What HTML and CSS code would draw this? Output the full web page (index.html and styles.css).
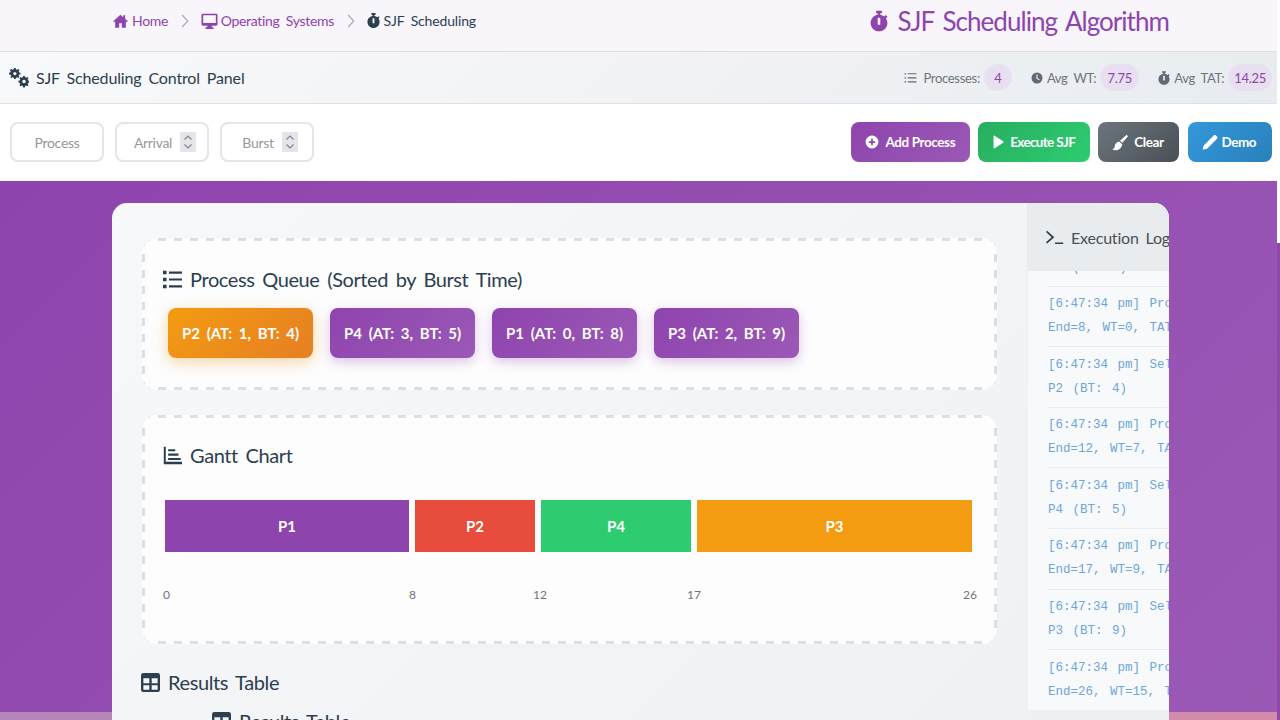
FILE: index.html
```html
<!DOCTYPE html>
<html lang="en">
<head>
<meta charset="utf-8">
<title>SJF Scheduling Algorithm</title>
<link rel="stylesheet" href="styles.css">
</head>
<body>
<svg class="defs" width="0" height="0" aria-hidden="true">
  <symbol id="i-watch" viewBox="0 0 448 512"><path d="M432 304c0 114.900-93.100 208-208 208S16 418.900 16 304c0-104 76.300-190.200 176-205.500V64h-28c-6.600 0-12-5.400-12-12V12c0-6.600 5.400-12 12-12h120c6.600 0 12 5.400 12 12v40c0 6.600-5.400 12-12 12h-28v34.500c37.500 5.800 71.700 21.600 99.700 44.600l27.500-27.500c4.700-4.700 12.300-4.700 17 0l28.300 28.300c4.700 4.700 4.700 12.300 0 17l-29.400 29.400-.6.600C419.700 223.300 432 262.200 432 304zm-176 36V188.500c0-6.600-5.400-12-12-12h-40c-6.600 0-12 5.400-12 12V340c0 6.600 5.400 12 12 12h40c6.600 0 12-5.400 12-12z"/></symbol>
  <symbol id="i-list" viewBox="0 0 24 24"><path d="M0 1h4.500v4.500H0zM0 9.800h4.500v4.500H0zM0 18.500h4.500V23H0zM7.500 2h16.500v2.700H7.500zM7.500 10.700h16.500v2.700H7.500zM7.500 19.400h16.500v2.700H7.500z"/></symbol>
  <symbol id="i-table" viewBox="0 0 24 24"><path fill-rule="evenodd" d="M3 0h18a3 3 0 0 1 3 3v18a3 3 0 0 1-3 3H3a3 3 0 0 1-3-3V3a3 3 0 0 1 3-3zm0 6.500v6.500h7.500V6.500zm10.500 0v6.500H21V6.500zM3 15.500V21h7.500v-5.500zm10.500 0V21H21v-5.500z"/></symbol>
  <symbol id="i-spin" viewBox="0 0 16 20"><path d="M4.500 7.500 8 4l3.500 3.500M4.500 12.500 8 16l3.500-3.500" fill="none" stroke="#85858c" stroke-width="1.200"/></symbol>
  <symbol id="i-chev" viewBox="0 0 10 18"><path d="M1.500 1.500 8.500 9l-7 7.500" fill="none" stroke="#a8a8b0" stroke-width="1.400"/></symbol>
</svg>

<nav class="topbar">
  <div class="crumbs">
    <a class="crumb">
      <svg class="ico" viewBox="0 0 24 24"><path d="M12 2.500 1 12.300l1.300 1.500L4 12.400V22h6v-6.500h4V22h6v-9.600l1.700 1.400 1.300-1.500-4-3.600V3.500h-3v2.800z"/></svg>
      Home
    </a>
    <svg class="sep"><use href="#i-chev"/></svg>
    <a class="crumb">
      <svg class="ico ico-wide" viewBox="0 0 24 24"><path fill-rule="evenodd" d="M2 1h20a2 2 0 0 1 2 2v14a2 2 0 0 1-2 2h-7l.7 2.500H18V24H6v-2.500h2.300L9 19H2a2 2 0 0 1-2-2V3a2 2 0 0 1 2-2zm.5 2.500V15h19V3.500z"/></svg>
      Operating Systems
    </a>
    <svg class="sep"><use href="#i-chev"/></svg>
    <span class="crumb crumb-now">
      <svg class="ico"><use href="#i-watch"/></svg>
      SJF Scheduling
    </span>
  </div>
  <h1 class="page-title"><svg class="title-ico"><use href="#i-watch"/></svg>SJF Scheduling Algorithm</h1>
</nav>

<header class="panel-head">
  <div class="panel-name">
    <svg class="gears" viewBox="0 0 24 24"><path fill-rule="evenodd" d="M7.500 1h2l.4 1.800 1.300.6 1.600-1 1.400 1.400-1 1.600.6 1.300 1.700.4v2l-1.700.4-.6 1.300 1 1.600-1.400 1.400-1.600-1-1.300.6-.4 1.700h-2l-.4-1.700-1.300-.6-1.600 1-1.400-1.400 1-1.600-.6-1.300L1 9.100v-2l1.700-.4.6-1.300-1-1.600 1.400-1.400 1.600 1 1.300-.6zm1 5a2.100 2.100 0 1 0 0 4.200 2.100 2.100 0 0 0 0-4.200z" transform="translate(-1 -1) scale(.95)"/><path fill-rule="evenodd" d="M17 9.500h2l.4 1.700 1.300.6 1.500-.9 1.200 1.400-1 1.500.6 1.300 1 .3v2l-1 .3-.6 1.300 1 1.500-1.200 1.400-1.500-.9-1.300.6-.4 1.700h-2l-.4-1.700-1.300-.6-1.500.9-1.300-1.400 1-1.500-.6-1.300-1.500-.3v-2l1.500-.3.600-1.300-1-1.500 1.300-1.400 1.500.9 1.300-.6zm1 4.700a2.100 2.100 0 1 0 0 4.200 2.100 2.100 0 0 0 0-4.200z"/></svg>
    SJF Scheduling Control Panel
  </div>
  <div class="stats">
    <div class="stat">
      <svg class="stat-ico" viewBox="0 0 24 24"><path d="M1 3h3v2.500H1zM1 10.500h3V13H1zM1 18h3v2.500H1zM7 3h16v2.200H7zM7 10.500h16v2.200H7zM7 18h16v2.200H7z"/></svg>
      <span>Processes:</span><b class="pill">4</b>
    </div>
    <div class="stat">
      <svg class="stat-ico" viewBox="0 0 24 24"><path fill-rule="evenodd" d="M12 1a11 11 0 1 1 0 22 11 11 0 0 1 0-22zm-1.300 4v8l5.500 3.400 1.200-1.900-4.300-2.600V5z"/></svg>
      <span>Avg WT:</span><b class="pill pill-wt">7.75</b>
    </div>
    <div class="stat">
      <svg class="stat-ico"><use href="#i-watch"/></svg>
      <span>Avg TAT:</span><b class="pill">14.25</b>
    </div>
  </div>
</header>

<section class="toolbar">
  <div class="fields">
    <div class="field">Process</div>
    <div class="field field-num">Arrival<svg class="spin"><use href="#i-spin"/></svg></div>
    <div class="field field-num">Burst<svg class="spin"><use href="#i-spin"/></svg></div>
  </div>
  <div class="actions">
    <button class="btn btn-add">
      <svg class="btn-ico" viewBox="0 0 24 24"><path fill-rule="evenodd" d="M12 1a11 11 0 1 1 0 22 11 11 0 0 1 0-22zm-1.500 5.500v4h-4v3h4v4h3v-4h4v-3h-4v-4z"/></svg>
      Add Process
    </button>
    <button class="btn btn-run">
      <svg class="btn-ico btn-ico-play" viewBox="0 0 20 24"><path d="M1 1.500c0-1 1-1.500 2-1l15.500 10.300c.9.600.9 1.800 0 2.400L3 23.500c-1 .5-2 0-2-1z"/></svg>
      Execute SJF
    </button>
    <button class="btn btn-clear">
      <svg class="btn-ico btn-ico-lg" viewBox="0 0 24 24"><path d="M22 .5 24 2.500 15.500 12.500 12 9.500zM10.500 10.500l5 4.300c-.5 3.500-3.500 8.200-8 8.700-2.500.2-5.500-.5-7-1.500 2-.5 3.500-2 3.500-4 .3-3.700 3-6.700 6.500-7.500z"/></svg>
      Clear
    </button>
    <button class="btn btn-demo">
      <svg class="btn-ico btn-ico-lg" viewBox="0 0 24 24"><path d="M17.500 1.500c1-1 2.500-1 3.500 0l1.500 1.500c1 1 1 2.500 0 3.500L7.500 21.500 1 23l1.500-6.500z"/></svg>
      Demo
    </button>
  </div>
</section>

<main class="stage">
  <div class="card">
    <div class="workspace">
      <section class="box box-queue">
        <h2 class="box-title"><svg class="head-ico"><use href="#i-list"/></svg>Process Queue (Sorted by Burst Time)</h2>
        <div class="queue">
          <div class="chip chip-next">P2 (AT: 1, BT: 4)</div>
          <div class="chip">P4 (AT: 3, BT: 5)</div>
          <div class="chip">P1 (AT: 0, BT: 8)</div>
          <div class="chip">P3 (AT: 2, BT: 9)</div>
        </div>
      </section>
      <section class="box box-gantt">
        <h2 class="box-title">
          <svg class="head-ico" viewBox="0 0 24 24"><path d="M1 1h2.500v19H24V23H1zM6.500 4h9v2.700h-9zM6.500 9.500h13v2.700h-13zM6.500 15h16v2.700h-16z"/></svg>
          Gantt Chart
        </h2>
        <div class="gantt">
          <div class="bar bar-p1" style="width:244px">P1</div>
          <div class="bar bar-p2" style="width:120px">P2</div>
          <div class="bar bar-p4" style="width:150px">P4</div>
          <div class="bar bar-p3" style="width:275px">P3</div>
        </div>
        <div class="ticks">
          <span style="width:246px">0</span>
          <span style="width:124px">8</span>
          <span style="width:154px">12</span>
          <span class="tick-last">17<span>26</span></span>
        </div>
      </section>
      <h2 class="results-title"><svg class="head-ico"><use href="#i-table"/></svg>Results Table</h2>
      <h3 class="results-sub"><svg class="head-ico"><use href="#i-table"/></svg>Results Table</h3>
    </div>
    <aside class="log">
      <h2 class="log-title">
        <svg class="term" viewBox="0 0 24 20"><path d="M1.500 1 11 9.500 1.500 18 0 16.300 7.500 9.500 0 2.800zM12 16.500h11V18.500H12z"/></svg>
        Execution Log
      </h2>
      <div class="log-body">
        <ul class="log-list">
          <li><span>[6:47:34 pm] Selected process</span><span>P1 (BT: 8)</span></li>
          <li><span>[6:47:34 pm] Processing P1:</span><span>End=8, WT=0, TAT=8</span></li>
          <li><span>[6:47:34 pm] Selected process</span><span>P2 (BT: 4)</span></li>
          <li><span>[6:47:34 pm] Processing P2:</span><span>End=12, WT=7, TAT=11</span></li>
          <li><span>[6:47:34 pm] Selected process</span><span>P4 (BT: 5)</span></li>
          <li><span>[6:47:34 pm] Processing P4:</span><span>End=17, WT=9, TAT=14</span></li>
          <li><span>[6:47:34 pm] Selected process</span><span>P3 (BT: 9)</span></li>
          <li><span>[6:47:34 pm] Processing P3:</span><span>End=26, WT=15, TAT=24</span></li>
        </ul>
      </div>
    </aside>
  </div>
</main>
</body>
</html>
```

FILE: styles.css
```css
* { box-sizing: border-box; }
html {
  height: 100%;
  background: linear-gradient(#fff 243px, #9049ab 243px);
}
body {
  margin: 0;
  width: 1277px;
  height: 720px;
  overflow: hidden;
  display: flex;
  flex-direction: column;
  font-family: Lato, "Noto Sans", sans-serif;
  word-spacing: 3px;
  color: #2c3e50;
}
.defs { position: absolute; }

.topbar {
  height: 52px;
  flex: none;
  padding: 0 108px 10px 112px;
  display: flex;
  align-items: center;
  justify-content: space-between;
  background: #f8f5fb;
  border-bottom: 1px solid #dedee2;
}
.crumbs { display: flex; align-items: center; font-size: 14px; letter-spacing: -.3px; height: 42px; }
.crumb { display: flex; align-items: center; gap: 3px; color: #8e44ad; }
.crumb-now { color: #2c3e50; gap: 4px; letter-spacing: -.15px; }
.sep { width: 8px; height: 16px; margin: 0 12px 0 12.500px; flex: none; }
.ico { width: 17px; height: 16px; fill: currentColor; }
.crumb-now .ico { width: 13px; height: 15px; }
.page-title {
  margin: 0;
  font-size: 26px;
  letter-spacing: -.95px;
  font-weight: 400;
  color: #8e44ad;
  display: flex;
  align-items: center;
  height: 42px;
}
.title-ico { width: 18px; height: 24px; margin-right: 9px; fill: currentColor; }

.panel-head {
  height: 52px;
  flex: none;
  display: flex;
  align-items: center;
  justify-content: space-between;
  padding: 0 5px 0 9px;
  background: linear-gradient(135deg, #f8f9fa, #e9ecef);
  border-bottom: 1px solid #dee2e6;
}
.panel-name { display: flex; align-items: center; gap: 7px; font-size: 16px; letter-spacing: -.15px; }
.gears { width: 20px; height: 20px; fill: #2c3e50; }
.stats { display: flex; align-items: center; gap: 19px; font-size: 13px; letter-spacing: -.3px; color: #6c757d; }
.stat { display: flex; align-items: center; gap: 4px; }
.stat-ico { width: 12px; height: 14px; fill: #5f6a72; }
.stat:first-child .stat-ico { margin-right: 2px; width: 13px; }
.pill {
  height: 27px;
  min-width: 28px;
  padding: 0 6px;
  border-radius: 14px;
  background: #e8e0f0;
  color: #8e44ad;
  font-weight: 400;
  font-size: 13px;
  display: flex;
  align-items: center;
  justify-content: center;
  word-spacing: 0;
}
.pill-wt { min-width: 39px; }

.toolbar {
  height: 77px;
  flex: none;
  display: flex;
  align-items: center;
  justify-content: space-between;
  padding: 0 5px 1px 10px;
  background: #fff;
}
.fields { display: flex; gap: 11px; }
.field {
  width: 94px;
  height: 40px;
  border: 2px solid #e3e5e8;
  border-radius: 8px;
  background: #fff;
  display: flex;
  align-items: center;
  justify-content: center;
  gap: 8px;
  font-size: 14px;
  letter-spacing: -.3px;
  color: #94989d;
}
.field-num { padding-left: 6px; }
.spin { width: 16px; height: 20px; background: #e4e4ea; flex: none; }
.actions { display: flex; gap: 8px; }
.btn {
  height: 40px;
  border: 0;
  border-radius: 8px;
  padding: 0 15px 0 14px;
  display: flex;
  align-items: center;
  gap: 6px;
  color: #fff;
  font: 700 13.500px Lato, "Noto Sans", sans-serif;
  letter-spacing: -.4px;
  word-spacing: 0;
}
.btn-ico { width: 14px; height: 14px; fill: #fff; }
.btn-ico-play { width: 11px; }
.btn-ico-lg { width: 16px; height: 17px; }
.btn-add { background: linear-gradient(135deg, #8e44ad, #9b59b6); }
.btn-run { background: linear-gradient(135deg, #27ae60, #2ecc71); letter-spacing: -.65px; padding: 0 15px; }
.btn-clear { background: linear-gradient(135deg, #6c757d, #495057); }
.btn-demo {
  background: linear-gradient(135deg, #3498db, #2980b9);
  gap: 4px;
  margin-left: 1px;
  padding: 0 16px 0 14px;
  letter-spacing: -.5px;
}

.stage {
  flex: 1;
  min-height: 0;
  padding: 22px 108px 0 112px;
  overflow: hidden;
  background:
    linear-gradient(135deg, #8e44ad, #9b59b6) top / 100% 531px no-repeat,
    linear-gradient(90deg, #b586ba, #d48ba8);
}
.card {
  width: 1057px;
  height: 560px;
  overflow: hidden;
  display: flex;
  border-radius: 15px 15px 0 0;
  background: linear-gradient(135deg, #f7f8fa, #eef0f3);
}
.workspace { width: 915px; flex: none; padding: 35px 30px 0; }
.box {
  border-radius: 15px;
  padding: 23px;
  background:
    repeating-linear-gradient(90deg, #dcdee2 0 8px, transparent 8px 16px) top / 100% 3px no-repeat,
    repeating-linear-gradient(90deg, #dcdee2 0 8px, transparent 8px 16px) bottom / 100% 3px no-repeat,
    repeating-linear-gradient(0deg, #dcdee2 0 8px, transparent 8px 16px) left / 3px 100% no-repeat,
    repeating-linear-gradient(0deg, #dcdee2 0 8px, transparent 8px 16px) right / 3px 100% no-repeat,
    #fdfdfe;
}
.box-queue { height: 152px; margin-bottom: 25px; }
.box-gantt { height: 229px; }
.box-title {
  margin: 0 0 0 -2px;
  display: flex;
  align-items: center;
  gap: 8px;
  font-size: 20px;
  letter-spacing: -.4px;
  font-weight: 400;
  line-height: 36px;
  color: #2c3e50;
}
.box-gantt .box-title { margin-top: -1px; }
.head-ico { width: 19px; height: 19px; fill: #2c3e50; flex: none; }
.queue { display: flex; gap: 17px; margin: 11px 0 0 3px; }
.chip {
  height: 50px;
  padding: 0 14px;
  border-radius: 8px;
  display: flex;
  align-items: center;
  color: #fff;
  font-size: 15px;
  font-weight: 700;
  background: linear-gradient(135deg, #8e44ad, #9b59b6);
  box-shadow: 0 4px 12px rgba(142, 68, 173, .3);
}
.chip-next {
  background: linear-gradient(135deg, #f39c12, #e67e22);
  box-shadow: 0 4px 15px rgba(243, 156, 18, .4);
}
.gantt { display: flex; gap: 6px; height: 52px; margin: 27px 0 0; }
.bar {
  flex: none;
  display: flex;
  align-items: center;
  justify-content: center;
  color: #fff;
  font-weight: 700;
  font-size: 15px;
}
.bar-p1 { background: #8e44ad; }
.bar-p2 { background: #e74c3c; }
.bar-p4 { background: #2ecc71; }
.bar-p3 { background: #f39c12; }
.ticks {
  display: flex;
  margin: 34px 0 0 -2px;
  width: 814px;
  font-size: 12px;
  line-height: 18px;
  color: #6c757d;
}
.tick-last { flex: 1; display: flex; justify-content: space-between; }
.results-title, .results-sub {
  margin: 0;
  display: flex;
  align-items: center;
  gap: 8px;
  font-weight: 400;
  font-size: 20px;
  letter-spacing: -.4px;
}
.results-title { line-height: 30px; margin: 23px 0 0 -1px; }
.results-sub { margin: 9px 0 0 70px; line-height: 30px; }

.log { width: 320px; flex: none; display: flex; flex-direction: column; background: #eef0f2; }
.log-title {
  margin: 0;
  height: 68px;
  flex: none;
  display: flex;
  align-items: center;
  gap: 7px;
  padding-left: 19px;
  background: #e9ecef;
  font-size: 16px;
  letter-spacing: -.2px;
  font-weight: 400;
  color: #495057;
}
.term { width: 18px; height: 17px; fill: #2c3e50; }
.log-body {
  margin-left: 1px;
  height: 439px;
  overflow: hidden;
  background: #f8f9fa;
  padding: 0 0 0 20px;
}
.log-list {
  margin: -45px 0 0 0;
  padding: 0;
  list-style: none;
  font: 12.500px/24px "Liberation Mono", monospace;
  word-spacing: 2px;
  color: #6ea6d8;
}
.log-list li {
  height: 60.600px;
  padding-top: 5.500px;
  border-bottom: 1px solid #e9ecef;
}
.log-list span { display: block; white-space: nowrap; }
```
